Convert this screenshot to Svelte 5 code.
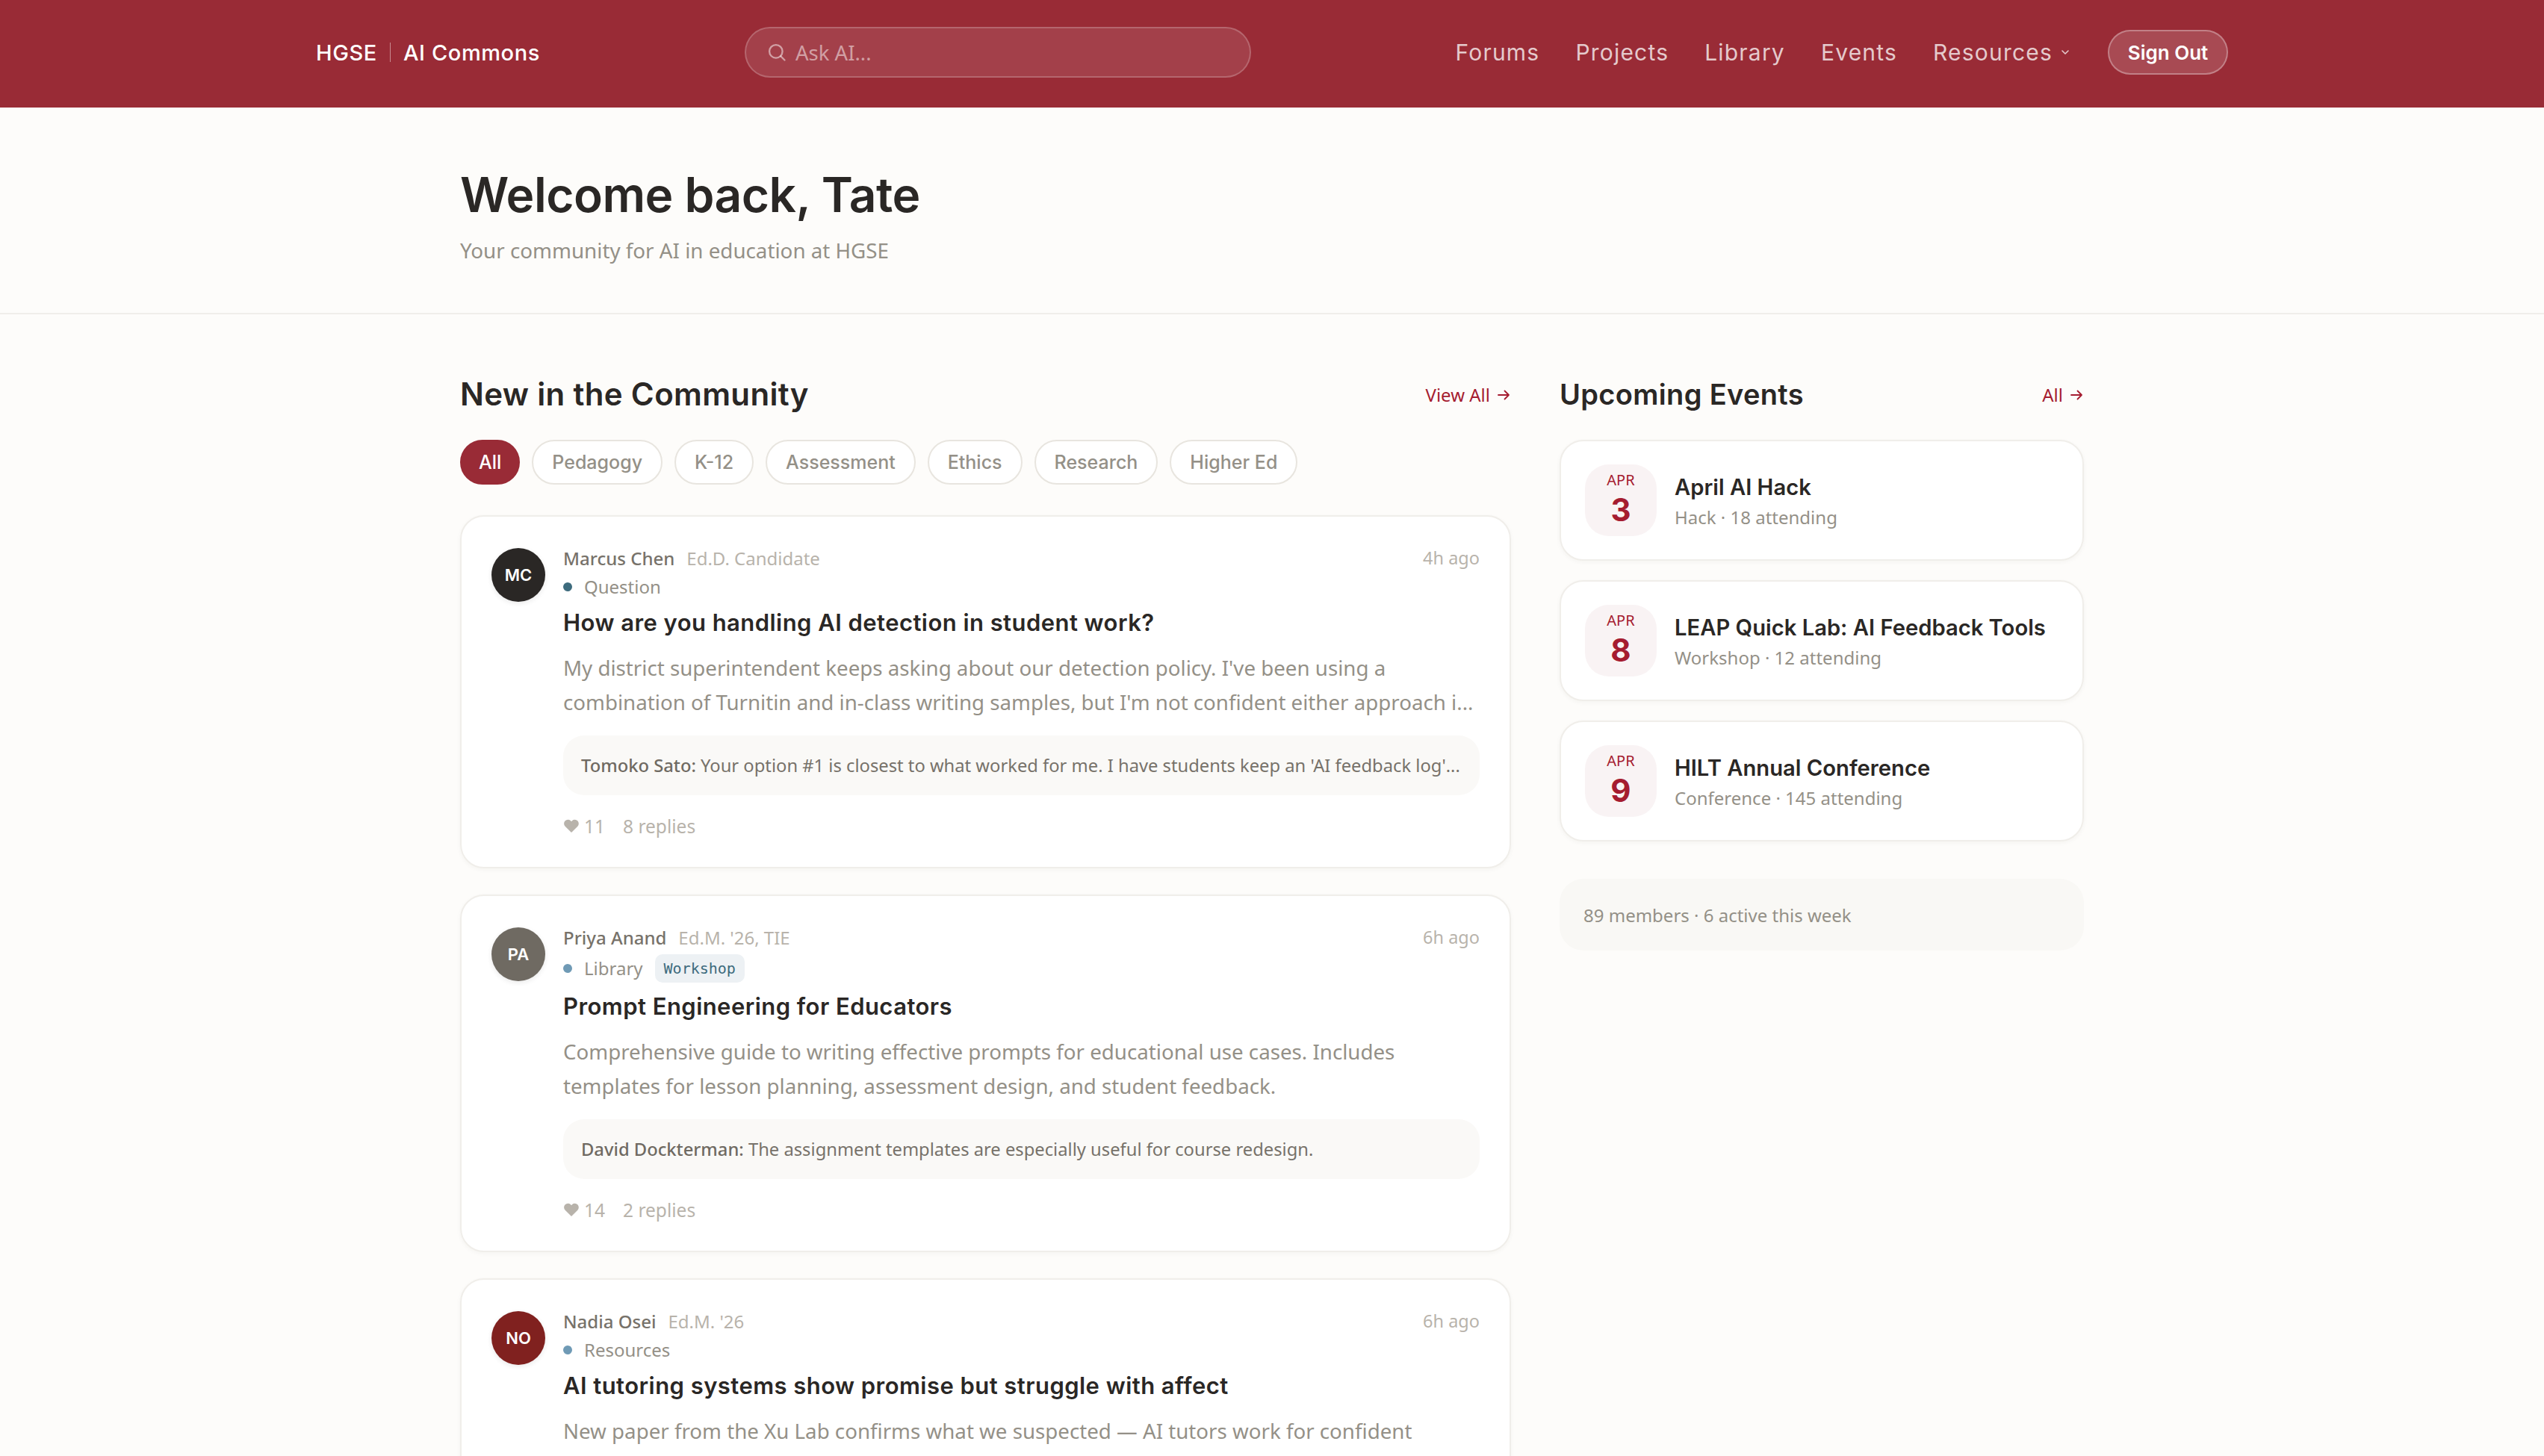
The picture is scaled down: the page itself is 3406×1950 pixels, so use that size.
<script lang="ts">
	type Post = {
		initials: string;
		tone: string;
		author: string;
		role: string;
		time: string;
		kind: string;
		dot: string;
		tag?: string;
		title: string;
		body: string[];
		replyBy?: string;
		reply?: string;
		likes?: number;
		replies?: string;
	};

	const filters = ['All', 'Pedagogy', 'K-12', 'Assessment', 'Ethics', 'Research', 'Higher Ed'];
	const navItems = ['Forums', 'Projects', 'Library', 'Events'];

	const posts: Post[] = [
		{
			initials: 'MC',
			tone: 'ink',
			author: 'Marcus Chen',
			role: 'Ed.D. Candidate',
			time: '4h ago',
			kind: 'Question',
			dot: 'teal',
			title: 'How are you handling AI detection in student work?',
			body: [
				"My district superintendent keeps asking about our detection policy. I've been using a",
				"combination of Turnitin and in-class writing samples, but I'm not confident either approach i..."
			],
			replyBy: 'Tomoko Sato:',
			reply: "Your option #1 is closest to what worked for me. I have students keep an 'AI feedback log'...",
			likes: 11,
			replies: '8 replies'
		},
		{
			initials: 'PA',
			tone: 'stone',
			author: 'Priya Anand',
			role: "Ed.M. '26, TIE",
			time: '6h ago',
			kind: 'Library',
			dot: 'blue',
			tag: 'Workshop',
			title: 'Prompt Engineering for Educators',
			body: [
				'Comprehensive guide to writing effective prompts for educational use cases. Includes',
				'templates for lesson planning, assessment design, and student feedback.'
			],
			replyBy: 'David Dockterman:',
			reply: 'The assignment templates are especially useful for course redesign.',
			likes: 14,
			replies: '2 replies'
		},
		{
			initials: 'NO',
			tone: 'brick',
			author: 'Nadia Osei',
			role: "Ed.M. '26",
			time: '6h ago',
			kind: 'Resources',
			dot: 'blue',
			title: 'AI tutoring systems show promise but struggle with affect',
			body: ['New paper from the Xu Lab confirms what we suspected — AI tutors work for confident']
		}
	];

	const events = [
		{ day: 3, title: 'April AI Hack', sub: 'Hack · 18 attending' },
		{ day: 8, title: 'LEAP Quick Lab: AI Feedback Tools', sub: 'Workshop · 12 attending' },
		{ day: 9, title: 'HILT Annual Conference', sub: 'Conference · 145 attending' }
	];
</script>

<div class="page">
	<header class="topbar">
		<div class="topbar-inner">
			<div class="brand">
				<span>HGSE</span>
				<span class="brand-rule"></span>
				<span>AI Commons</span>
			</div>
			<div class="ask">
				<svg width="28" height="28" viewBox="0 0 24 24" fill="none" stroke="currentColor" stroke-width="2" stroke-linecap="round">
					<circle cx="11" cy="11" r="7.5" />
					<path d="M16.500 16.500 21 21" />
				</svg>
				<span>Ask AI...</span>
			</div>
			<nav class="nav">
				{#each navItems as item}
					<span>{item}</span>
				{/each}
				<span class="nav-more">
					Resources
					<svg width="14" height="14" viewBox="0 0 14 14" fill="none" stroke="currentColor" stroke-width="1.6" stroke-linecap="round" stroke-linejoin="round">
						<path d="M3 5l4 4 4-4" />
					</svg>
				</span>
				<button type="button" class="signout">Sign Out</button>
			</nav>
		</div>
	</header>

	<section class="hero">
		<div class="wrap">
			<h1>Welcome back, Tate</h1>
			<p>Your community for AI in education at HGSE</p>
		</div>
	</section>

	<main class="wrap columns">
		<div>
			<div class="section-head">
				<h2>New in the Community</h2>
				<span class="more">View All
					<svg width="20" height="20" viewBox="0 0 20 20" fill="none" stroke="currentColor" stroke-width="1.8" stroke-linecap="round" stroke-linejoin="round">
						<path d="M3 10h14M11.500 4.500 17 10l-5.500 5.500" />
					</svg>
				</span>
			</div>
			<div class="chips">
				{#each filters as filter, i}
					<button type="button" class="chip" class:active={i === 0}>{filter}</button>
				{/each}
			</div>
			<div class="feed">
				{#each posts as post}
					<article class="post">
						<div class="avatar {post.tone}">{post.initials}</div>
						<div class="post-main">
							<div class="byline">
								<span class="author">{post.author}</span>
								<span class="role">{post.role}</span>
								<span class="time">{post.time}</span>
							</div>
							<div class="kind">
								<span class="dot {post.dot}"></span>
								<span>{post.kind}</span>
								{#if post.tag}
									<span class="tag">{post.tag}</span>
								{/if}
							</div>
							<h3>{post.title}</h3>
							<div class="excerpt">
								{#each post.body as line}
									<div>{line}</div>
								{/each}
							</div>
							{#if post.reply}
								<div class="reply"><span><b>{post.replyBy}</b> {post.reply}</span></div>
							{/if}
							{#if post.replies}
								<div class="stats">
									<span class="likes">
										<svg width="22" height="20" viewBox="0 0 24 22" fill="currentColor">
											<path d="M12 21 2.800 11.800a5.800 5.800 0 0 1 0-8.200 5.800 5.800 0 0 1 8.200 0l1 1 1-1a5.800 5.800 0 0 1 8.200 8.200z" />
										</svg>
										{post.likes}
									</span>
									<span>{post.replies}</span>
								</div>
							{/if}
						</div>
					</article>
				{/each}
			</div>
		</div>

		<aside>
			<div class="section-head">
				<h2 class="side-title">Upcoming Events</h2>
				<span class="more">All
					<svg width="20" height="20" viewBox="0 0 20 20" fill="none" stroke="currentColor" stroke-width="1.8" stroke-linecap="round" stroke-linejoin="round">
						<path d="M3 10h14M11.500 4.500 17 10l-5.500 5.500" />
					</svg>
				</span>
			</div>
			<div class="events">
				{#each events as event}
					<div class="event">
						<div class="date">
							<span class="month">APR</span>
							<span class="day">{event.day}</span>
						</div>
						<div class="event-text">
							<div class="event-title">{event.title}</div>
							<div class="event-sub">{event.sub}</div>
						</div>
					</div>
				{/each}
			</div>
			<div class="members">89 members · 6 active this week</div>
		</aside>
	</main>
</div>

<style>
	:global(body) {
		margin: 0;
		background: #fdfcfa;
	}

	.page {
		height: 100vh;
		overflow: hidden;
		font-family: 'Noto Sans', 'Open Sans', sans-serif;
		color: #2a2725;
		background: #fdfcfa;
	}

	.topbar {
		height: 144px;
		box-sizing: border-box;
		padding-bottom: 4px;
		background: #992b36;
	}

	.topbar-inner {
		width: 2560px;
		height: 100%;
		margin: 0 auto;
		display: flex;
		align-items: center;
		font-family: Inter, sans-serif;
	}

	.brand {
		width: 574px;
		display: flex;
		align-items: center;
		gap: 17px;
		font-size: 29px;
		font-weight: 500;
		letter-spacing: 0.6px;
		color: #fff;
	}

	.brand-rule {
		width: 1px;
		height: 26px;
		background: rgba(255, 255, 255, 0.45);
	}

	.ask {
		width: 678px;
		height: 68px;
		box-sizing: border-box;
		padding: 0 27px;
		display: flex;
		align-items: center;
		gap: 11px;
		border: 2px solid rgba(255, 255, 255, 0.2);
		border-radius: 34px;
		background: rgba(255, 255, 255, 0.1);
		color: rgba(255, 255, 255, 0.5);
		font-family: 'Noto Sans', sans-serif;
		font-size: 27.5px;
	}

	.nav {
		margin-left: auto;
		display: flex;
		align-items: center;
		gap: 48px;
		font-size: 30px;
		letter-spacing: 1.2px;
		color: rgba(255, 255, 255, 0.75);
	}

	.nav-more {
		display: flex;
		align-items: center;
		gap: 10px;
	}

	.signout {
		height: 60px;
		width: 161px;
		padding: 0;
		margin-left: 2px;
		border: 2px solid rgba(255, 255, 255, 0.3);
		border-radius: 30px;
		background: rgba(255, 255, 255, 0.15);
		color: #fff;
		font: 600 26px Inter, sans-serif;
	}

	.wrap {
		width: 2174px;
		margin: 0 auto;
	}

	.hero {
		height: 277px;
		box-sizing: border-box;
		padding-top: 77px;
		border-bottom: 2px solid #f0eeea;
	}

	h1 {
		margin: 0;
		font: 600 64px/80px Inter, sans-serif;
		letter-spacing: -0.5px;
		color: #2a2725;
	}

	.hero p {
		margin: 14px 0 0;
		font-size: 27.75px;
		line-height: 40px;
		color: #949087;
	}

	.columns {
		display: grid;
		grid-template-columns: 1fr 702px;
		gap: 65px;
		padding-top: 81px;
	}

	.section-head {
		height: 52px;
		display: flex;
		align-items: center;
		justify-content: space-between;
	}

	h2 {
		margin: 0;
		font: 600 42px/52px Inter, sans-serif;
		letter-spacing: 0.33px;
		color: #2a2725;
	}

	.side-title {
		font-size: 38px;
	}

	.more {
		display: flex;
		align-items: center;
		gap: 8px;
		font-size: 24px;
		color: #a51c30;
	}

	.more svg {
		margin-top: 2px;
	}

	.chips {
		display: flex;
		gap: 16px;
		margin-top: 35px;
	}

	.chip {
		height: 60px;
		padding: 0 25px;
		border: 2px solid #e8e5df;
		border-radius: 30px;
		background: #fff;
		color: #949087;
		font: 500 25px Inter, sans-serif;
	}

	.chip.active {
		padding: 0 23px;
		border-color: #992b36;
		background: #992b36;
		color: #fff;
	}

	.feed {
		display: grid;
		gap: 35px;
		margin-top: 41px;
	}

	.post {
		display: grid;
		grid-template-columns: 72px 1fr;
		gap: 24px;
		padding: 40px 40px 39px;
		border: 2px solid #f0eeea;
		border-radius: 32px;
		background: #fff;
		box-shadow: 0 2px 6px rgba(42, 39, 37, 0.04);
	}

	.avatar {
		width: 72px;
		height: 72px;
		margin-top: 2px;
		display: flex;
		align-items: center;
		justify-content: center;
		border-radius: 50%;
		box-shadow: 0 2px 6px rgba(42, 39, 37, 0.1);
		color: #fff;
		font: 600 22px Inter, sans-serif;
	}

	.ink {
		background: #2a2725;
	}

	.stone {
		background: #6f6a62;
	}

	.brick {
		background: #80211f;
	}

	.post-main {
		min-width: 0;
	}

	.byline {
		height: 30px;
		display: flex;
		align-items: center;
		gap: 16px;
		font-size: 24px;
	}

	.author {
		font-weight: 500;
		color: #77726a;
	}

	.role {
		color: #b8b3ab;
	}

	.time {
		margin-left: auto;
		font-size: 23.5px;
		color: #b8b3ab;
	}

	.kind {
		min-height: 32px;
		margin-top: 8px;
		display: flex;
		align-items: center;
		font-size: 24px;
		line-height: 32px;
		color: #949087;
	}

	.dot {
		width: 12px;
		height: 12px;
		margin-right: 16px;
		border-radius: 50%;
	}

	.teal {
		background: #3d6b7d;
	}

	.blue {
		background: #6f9ab5;
	}

	.tag {
		height: 38px;
		margin-left: 16px;
		padding: 0 12px;
		display: flex;
		align-items: center;
		border-radius: 10px;
		background: #edf1f4;
		color: #3d6b7d;
		font: 500 20px 'DejaVu Sans Mono', 'Liberation Mono', monospace;
	}

	h3 {
		margin: 11px 0 0;
		font: 600 31px/42px Inter, sans-serif;
		letter-spacing: 0.45px;
		color: #2a2725;
	}

	.excerpt {
		margin-top: 16px;
		font-size: 27.7px;
		line-height: 46px;
		white-space: nowrap;
		color: #949087;
	}

	.reply {
		height: 80px;
		margin-top: 22px;
		padding: 0 24px;
		display: flex;
		align-items: center;
		border-radius: 28px;
		background: #faf9f7;
		font-size: 23.75px;
		white-space: nowrap;
		color: #77726a;
	}

	.reply b {
		font-weight: 500;
		color: #6f6a62;
	}

	.stats {
		height: 32px;
		margin-top: 25px;
		display: flex;
		align-items: center;
		gap: 24px;
		font-size: 24.5px;
		color: #b8b3ab;
	}

	.likes {
		display: flex;
		align-items: center;
		gap: 6px;
	}

	.events {
		display: grid;
		gap: 26px;
		margin-top: 35px;
	}

	.event {
		height: 162px;
		box-sizing: border-box;
		padding: 0 32px;
		display: flex;
		align-items: center;
		gap: 24px;
		border: 2px solid #f0eeea;
		border-radius: 32px;
		background: #fff;
		box-shadow: 0 2px 6px rgba(42, 39, 37, 0.04);
	}

	.date {
		width: 96px;
		height: 96px;
		flex: none;
		box-sizing: border-box;
		padding-bottom: 4px;
		display: flex;
		flex-direction: column;
		align-items: center;
		justify-content: center;
		border-radius: 32px;
		background: #f9f3f4;
		color: #a51c30;
	}

	.month {
		font-size: 20px;
		line-height: 24px;
	}

	.day {
		margin-top: 5px;
		font: 700 42px/46px Inter, sans-serif;
	}

	.event-text {
		padding-top: 3px;
	}

	.event-title {
		font: 600 29.2px/40px Inter, sans-serif;
		color: #2a2725;
	}

	.event-sub {
		margin-top: 2px;
		font-size: 24px;
		line-height: 36px;
		color: #949087;
	}

	.members {
		height: 96px;
		margin-top: 50px;
		padding: 0 32px;
		display: flex;
		align-items: center;
		border-radius: 32px;
		background: #f9f8f5;
		font-size: 24px;
		color: #949087;
	}
</style>
